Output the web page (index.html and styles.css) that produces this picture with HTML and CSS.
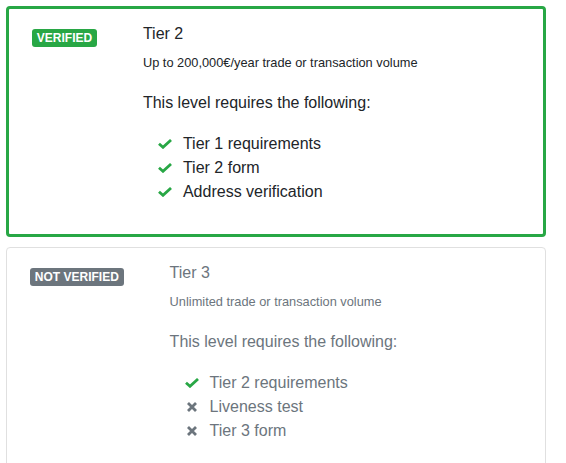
FILE: index.html
```html
<!DOCTYPE html>
<html lang="en">
<head>
<meta charset="UTF-8">
<meta name="viewport" content="width=device-width, initial-scale=1.0">
<title>Verification levels</title>
<link rel="stylesheet" href="styles.css">
</head>
<body>
<div class="tiers">
  <div class="tier tier-active">
    <div class="tier-status">
      <span class="badge badge-success">VERIFIED</span>
    </div>
    <div class="tier-body">
      <h5 class="tier-title">Tier 2</h5>
      <p class="tier-limit">Up to 200,000€/year trade or transaction volume</p>
      <p class="tier-intro">This level requires the following:</p>
      <ul class="req-list">
        <li><span class="req-icon"><svg class="icon-check" viewBox="0 0 14 10"><path d="M1 4.8 L5 8.3 L13 1"/></svg></span>Tier 1 requirements</li>
        <li><span class="req-icon"><svg class="icon-check" viewBox="0 0 14 10"><path d="M1 4.8 L5 8.3 L13 1"/></svg></span>Tier 2 form</li>
        <li><span class="req-icon"><svg class="icon-check" viewBox="0 0 14 10"><path d="M1 4.8 L5 8.3 L13 1"/></svg></span>Address verification</li>
      </ul>
    </div>
  </div>

  <div class="tier tier-muted">
    <div class="tier-status">
      <span class="badge badge-secondary">NOT VERIFIED</span>
    </div>
    <div class="tier-body">
      <h5 class="tier-title">Tier 3</h5>
      <p class="tier-limit">Unlimited trade or transaction volume</p>
      <p class="tier-intro">This level requires the following:</p>
      <ul class="req-list">
        <li><span class="req-icon"><svg class="icon-check" viewBox="0 0 14 10"><path d="M1 4.8 L5 8.3 L13 1"/></svg></span>Tier 2 requirements</li>
        <li><span class="req-icon"><svg class="icon-times" viewBox="0 0 10 10"><path d="M1 1 L9 9 M9 1 L1 9"/></svg></span>Liveness test</li>
        <li><span class="req-icon"><svg class="icon-times" viewBox="0 0 10 10"><path d="M1 1 L9 9 M9 1 L1 9"/></svg></span>Tier 3 form</li>
      </ul>
    </div>
  </div>
</div>
</body>
</html>
```

FILE: styles.css
```css
body {
  font-family: "Liberation Sans", Arial, sans-serif;
  background-color: #fff;
  color: #212529;
  margin: 0;
  padding: 0;
}

.tiers {
  padding: 6px;
  width: 540px;
}

.tier {
  display: flex;
  align-items: flex-start;
  gap: 46px;
  padding: 15px 23px 30px;
  border-radius: 4px;
  background-color: #fff;
}

.tier-active {
  border: 3px solid #28a745;
}

.tier-muted {
  border: 1px solid #e0e0e0;
  margin-top: 10px;
  color: #6c757d;
}

.badge {
  display: inline-block;
  margin-top: 5px;
  padding: 3px 4.8px;
  font-size: 12px;
  font-weight: bold;
  line-height: 1;
  color: #fff;
  border-radius: 3px;
}

.badge-success {
  background-color: #28a745;
}

.badge-secondary {
  background-color: #6c757d;
}

.tier-title {
  margin: 0;
  font-size: 16px;
  font-weight: normal;
  line-height: 20px;
}

.tier-limit {
  margin: 10px 0 0;
  font-size: 12.8px;
  line-height: 18px;
}

.tier-intro {
  margin: 19px 0 0;
  font-size: 16px;
  line-height: 24px;
}

.req-list {
  list-style: none;
  margin: 17px 0 0;
  padding: 0 0 0 12px;
}

.req-list li {
  display: flex;
  align-items: center;
  font-size: 16px;
  line-height: 24px;
}

.req-icon {
  width: 20px;
  margin-right: 8px;
  display: flex;
  justify-content: center;
}

.icon-check {
  width: 14px;
  height: 10px;
  fill: none;
  stroke: #28a745;
  stroke-width: 2.8;
}

.icon-times {
  width: 10px;
  height: 10px;
  fill: none;
  stroke: #6c757d;
  stroke-width: 2.8;
}
```
